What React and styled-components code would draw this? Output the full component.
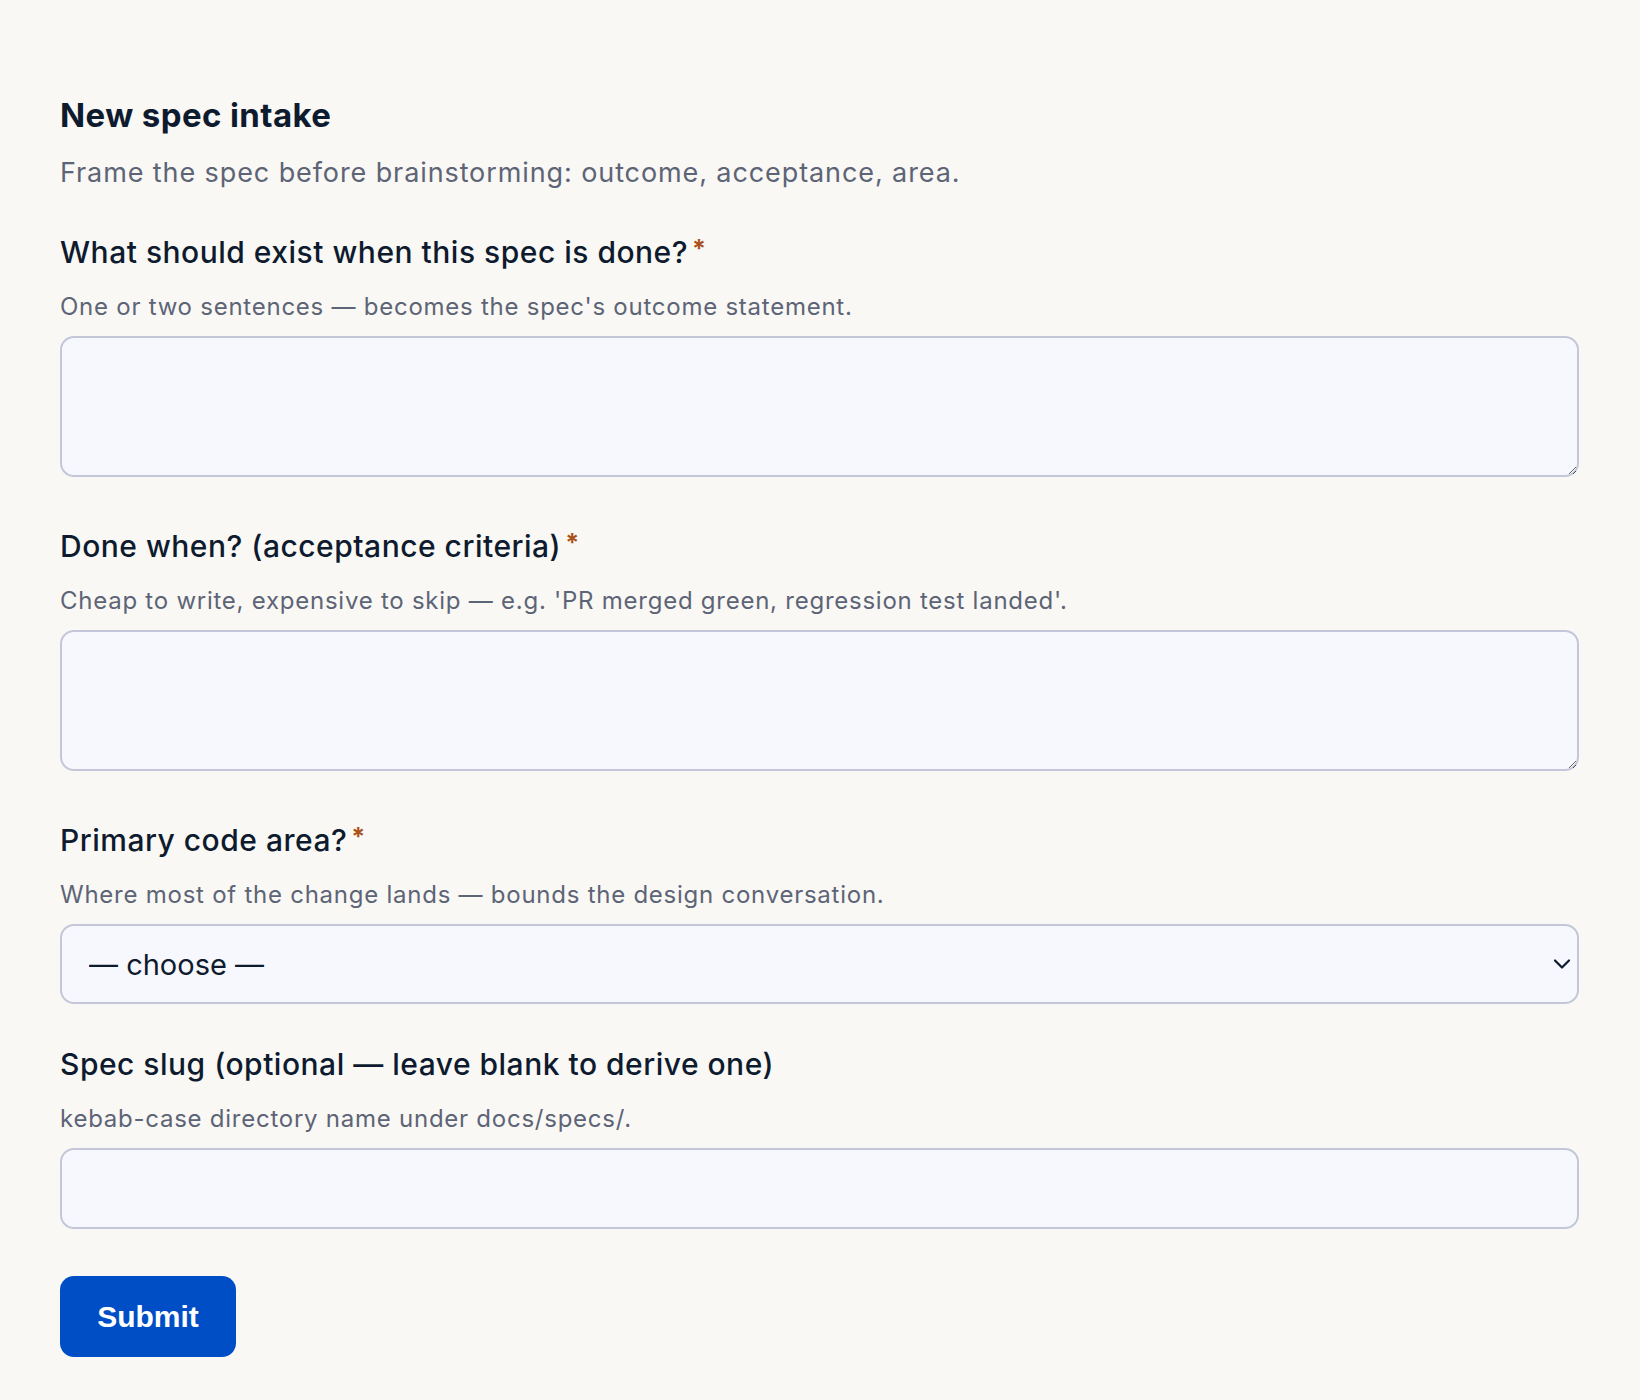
import styled, { createGlobalStyle } from "styled-components";

const COLORS = {
  background: "#f9f8f5",
  ink: "#0e1b2e",
  muted: "#5d6475",
  accent: "#a9521b",
  fieldBg: "#f7f8fd",
  fieldBorder: "#c3c7d9",
  primary: "#004ec6",
};

const GlobalStyle = createGlobalStyle`
  html, body {
    margin: 0;
    background: ${COLORS.background};
    font-family: Inter, "Noto Sans", sans-serif;
    color: ${COLORS.ink};
  }
`;

const Page = styled.main`
  padding: 95px 61px 46px 60px;
`;

const Title = styled.h1`
  margin: 0;
  font-size: 33px;
  line-height: 40px;
  font-weight: 700;
  letter-spacing: 0.4px;
`;

const Intro = styled.p`
  margin: 20px 0 40px;
  font-size: 27px;
  line-height: 36px;
  letter-spacing: 0.9px;
  color: ${COLORS.muted};
`;

const Form = styled.form`
  display: flex;
  flex-direction: column;
  gap: 42px;
`;

const Field = styled.div`
  display: flex;
  flex-direction: column;
`;

const Label = styled.label`
  font-size: 30px;
  line-height: 36px;
  font-weight: 500;
  letter-spacing: 0.5px;
`;

const Required = styled.span`
  color: ${COLORS.accent};
  font-weight: 700;
  margin-left: 4px;
  font-size: 25px;
  vertical-align: 5px;
`;

const Help = styled.p`
  margin: 20px 0 13px;
  font-size: 24px;
  line-height: 33px;
  letter-spacing: 0.75px;
  color: ${COLORS.muted};
`;

const fieldBase = `
  box-sizing: border-box;
  width: 100%;
  background: ${COLORS.fieldBg};
  border: 2px solid ${COLORS.fieldBorder};
  border-radius: 14px;
  font-family: Inter, "Noto Sans", sans-serif;
  font-size: 29px;
  color: ${COLORS.ink};
  outline: none;
`;

const TextArea = styled.textarea`
  ${fieldBase}
  display: block;
  height: 141px;
  padding: 16px 27px;
  margin-bottom: 6px;
  resize: vertical;
`;

const SelectWrap = styled.div`
  position: relative;
`;

const Select = styled.select`
  ${fieldBase}
  display: block;
  height: 80px;
  padding: 0 60px 0 27px;
  appearance: none;
  -webkit-appearance: none;
`;

const Chevron = styled.svg`
  position: absolute;
  right: 7px;
  top: 50%;
  margin-top: -9px;
  width: 20px;
  height: 18px;
  pointer-events: none;
`;

const Input = styled.input`
  ${fieldBase}
  display: block;
  height: 81px;
  padding: 0 27px;
`;

const SubmitButton = styled.button`
  align-self: flex-start;
  margin-top: 5px;
  width: 176px;
  height: 81px;
  border: none;
  border-radius: 14px;
  background: ${COLORS.primary};
  color: #ffffff;
  font-family: "Liberation Sans", Arial, sans-serif;
  font-weight: 700;
  font-size: 30px;
  cursor: pointer;
`;

export default function App() {
  return (
    <>
      <GlobalStyle />
      <Page>
        <Title>New spec intake</Title>
        <Intro>Frame the spec before brainstorming: outcome, acceptance, area.</Intro>
        <Form onSubmit={(e) => e.preventDefault()}>
          <Field>
            <Label htmlFor="outcome">
              What should exist when this spec is done?<Required>*</Required>
            </Label>
            <Help>One or two sentences — becomes the spec's outcome statement.</Help>
            <TextArea id="outcome" />
          </Field>
          <Field>
            <Label htmlFor="acceptance">
              Done when? (acceptance criteria)<Required>*</Required>
            </Label>
            <Help>
              Cheap to write, expensive to skip — e.g. 'PR merged green, regression test landed'.
            </Help>
            <TextArea id="acceptance" />
          </Field>
          <Field>
            <Label htmlFor="area">
              Primary code area?<Required>*</Required>
            </Label>
            <Help>Where most of the change lands — bounds the design conversation.</Help>
            <SelectWrap>
              <Select id="area" defaultValue="">
                <option value="">— choose —</option>
              </Select>
              <Chevron viewBox="0 0 20 18" fill="none">
                <path
                  d="M3 5.5 L10 12.5 L17 5.5"
                  stroke={COLORS.ink}
                  strokeWidth="2.2"
                  strokeLinecap="round"
                  strokeLinejoin="round"
                />
              </Chevron>
            </SelectWrap>
          </Field>
          <Field>
            <Label htmlFor="slug">Spec slug (optional — leave blank to derive one)</Label>
            <Help>kebab-case directory name under docs/specs/.</Help>
            <Input id="slug" type="text" />
          </Field>
          <SubmitButton type="submit">Submit</SubmitButton>
        </Form>
      </Page>
    </>
  );
}
